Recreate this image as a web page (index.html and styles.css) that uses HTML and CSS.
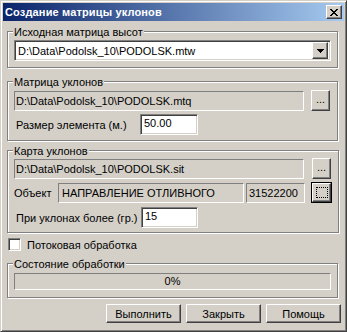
FILE: index.html
```html
<!DOCTYPE html>
<html lang="ru">
<head>
	<meta charset="UTF-8">
	<title>Создание матрицы уклонов</title>
	<link rel="stylesheet" href="styles.css">
</head>
<body>
	<div class="window">
		<div class="titlebar">
			<span class="title">Создание матрицы уклонов</span>
			<span class="raised close">
				<svg width="8" height="7" viewBox="0 0 8 7"><path d="M0 0h2v1h1v1h2V1h1V0h2v1H7v1H6v1H5v1h1v1h1v1h1v1H6V6H5V5H3v1H2v1H0V6h1V5h1V4h1V3H2V2H1V1H0z" fill="#000"/></svg>
			</span>
		</div>
		<div class="client">
			<fieldset class="group g1">
				<legend>Исходная матрица высот</legend>
				<div class="combo sunken">
					<span class="combo-text">D:\Data\Podolsk_10\PODOLSK.mtw</span>
					<span class="raised combo-btn">
						<svg width="7" height="4" viewBox="0 0 7 4"><path d="M0 0h7v1H6v1H5v1H4v1H3V3H2V2H1V1H0z" fill="#000"/></svg>
					</span>
				</div>
			</fieldset>

			<fieldset class="group g2">
				<legend>Матрица уклонов</legend>
				<div class="row row-path">
					<div class="static path">D:\Data\Podolsk_10\PODOLSK.mtq</div>
					<div class="raised btn-dots">...</div>
				</div>
				<div class="row row-edit">
					<span class="label label-size">Размер элемента (м.)</span>
					<div class="sunken edit edit-size">50.00</div>
				</div>
			</fieldset>

			<fieldset class="group g3">
				<legend>Карта уклонов</legend>
				<div class="row row-path">
					<div class="static path">D:\Data\Podolsk_10\PODOLSK.sit</div>
					<div class="raised btn-dots">...</div>
				</div>
				<div class="row row-object">
					<span class="label label-object">Объект</span>
					<div class="static obj-name">НАПРАВЛЕНИЕ ОТЛИВНОГО</div>
					<div class="static obj-code">31522200</div>
					<div class="btn-default">
						<div class="raised btn-select"><span class="dotted"></span></div>
					</div>
				</div>
				<div class="row row-edit">
					<span class="label label-angle">При уклонах более (гр.)</span>
					<div class="sunken edit edit-angle">15</div>
				</div>
			</fieldset>

			<label class="check">
				<span class="sunken box"></span>
				<span>Потоковая обработка</span>
			</label>

			<fieldset class="group g4">
				<legend>Состояние обработки</legend>
				<div class="progress">0%</div>
			</fieldset>

			<div class="buttons">
				<div class="raised push">Выполнить</div>
				<div class="raised push">Закрыть</div>
				<div class="raised push">Помощь</div>
			</div>
		</div>
	</div>
</body>
</html>
```

FILE: styles.css
```css
*{
	margin: 0;
	padding: 0;
	box-sizing: border-box;
}
body{
	background: #d4d0c8;
	font-family: "Liberation Sans", Arial, sans-serif;
	font-size: 11px;
	color: #000;
}
.window{
	width: 347px;
	height: 332px;
	background: #d4d0c8;
	border: 1px solid;
	border-color: #d4d0c8 #404040 #404040 #d4d0c8;
	box-shadow: inset 1px 1px 0 #fff, inset -1px -1px 0 #808080;
	padding: 2px;
}
.titlebar{
	height: 18px;
	margin-bottom: 1px;
	padding: 0 2px 0 2px;
	background: linear-gradient(to right, #0a246a, #a6caf0);
	display: flex;
	align-items: center;
	justify-content: space-between;
}
.title{
	color: #fff;
	font-weight: bold;
	font-size: 11px;
	letter-spacing: 0.15px;
}

/* 3d edges */
.raised{
	background: #d4d0c8;
	border: 1px solid;
	border-color: #fff #404040 #404040 #fff;
	box-shadow: inset -1px -1px 0 #808080;
	display: flex;
	align-items: center;
	justify-content: center;
}
.sunken{
	background: #fff;
	border: 1px solid;
	border-color: #808080 #fff #fff #808080;
	box-shadow: inset 1px 1px 0 #404040, inset -1px -1px 0 #d4d0c8;
}
.static{
	background: #d4d0c8;
	border: 1px solid;
	border-color: #808080 #fff #fff #808080;
	height: 20px;
	line-height: 18px;
	padding-left: 1px;
	white-space: nowrap;
	overflow: hidden;
}

.close{
	width: 16px;
	height: 14px;
}

.client{
	padding: 0 3px 0 4px;
}
.group{
	border: 1px solid #808080;
	box-shadow: inset 1px 1px 0 #fff, 1px 1px 0 #fff;
	margin-right: 3px;
	padding: 0 6px 6px;
}
.group legend{
	background: #d4d0c8;
	line-height: 13px;
	padding: 2px 1px 0;
	margin-left: -1px;
}
.g1{
	margin-top: 3px;
}
.g2{
	margin-top: 6px;
	padding-bottom: 5px;
}
.g3{
	margin-top: 2px;
	padding-bottom: 4px;
}
.g4{
	margin-top: 5px;
	padding-bottom: 7px;
}

.combo{
	height: 21px;
	margin-top: 1px;
	padding: 2px;
	display: flex;
	align-items: center;
}
.combo-text{
	flex: 1;
	padding-left: 1px;
}
.combo-btn{
	width: 16px;
	height: 17px;
}

.row{
	display: flex;
	align-items: center;
}
.row-path{
	height: 21px;
	justify-content: space-between;
	margin-right: 1px;
}
.g2 .row-path{
	margin-top: 1px;
}
.path{
	width: 290px;
}
.btn-dots{
	width: 19px;
	height: 21px;
	padding-bottom: 3px;
}
.row-edit{
	height: 21px;
	margin-top: 3px;
}
.label{
	padding-left: 2px;
}
.label-size{
	width: 126px;
}
.label-angle{
	width: 127px;
}
.edit{
	height: 21px;
	line-height: 17px;
	padding-left: 3px;
}
.edit-size{
	width: 58px;
}
.edit-angle{
	width: 57px;
}
.g3 .row-edit{
	margin-top: 4px;
}

.row-object{
	height: 21px;
	margin-top: 3px;
}
.label-object{
	padding-left: 0;
	width: 44px;
}
.obj-name{
	width: 186px;
	padding-left: 3px;
}
.obj-code{
	width: 59px;
	margin-left: 2px;
	padding-left: 2px;
}
.btn-default{
	width: 21px;
	height: 21px;
	margin-left: 6px;
	border: 1px solid #000;
}
.btn-select{
	width: 19px;
	height: 19px;
}
.dotted{
	width: 12px;
	height: 11px;
	border: 1px dotted #000;
}

.check{
	display: flex;
	align-items: center;
	height: 13px;
	margin-top: 5px;
	padding-left: 1px;
}
.box{
	width: 13px;
	height: 13px;
	margin-right: 6px;
}

.progress{
	height: 17px;
	margin-top: 2px;
	border: 1px solid;
	border-color: #808080 #fff #fff #808080;
	text-align: center;
	line-height: 15px;
}

.buttons{
	display: flex;
	justify-content: flex-end;
	gap: 5px;
	margin-top: 6px;
}
.push{
	width: 75px;
	height: 19px;
}
```
